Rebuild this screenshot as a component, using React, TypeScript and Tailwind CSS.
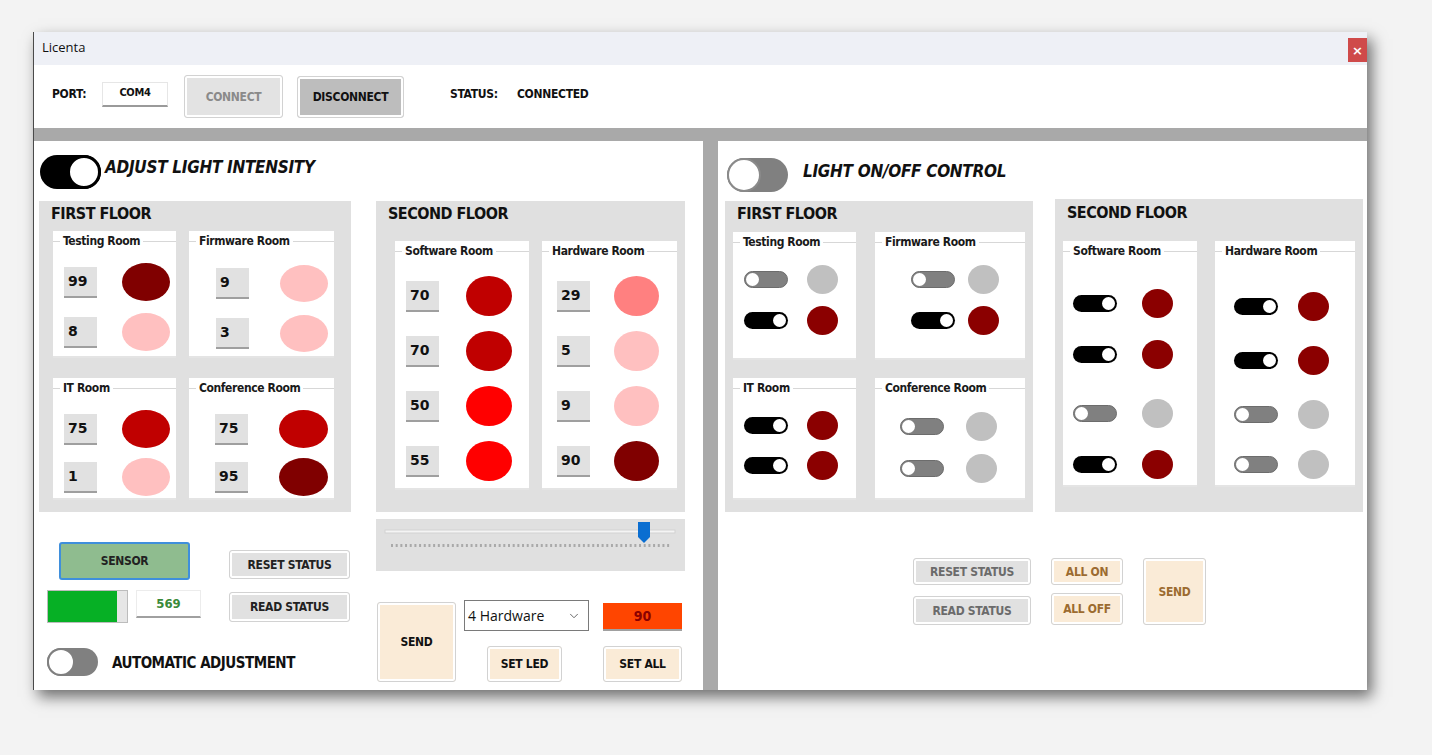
import React from "react";
import { ChevronDown } from "lucide-react";

const NARROW =
  "font-['Liberation_Sans_Narrow','DejaVu_Sans_Condensed',Roboto,sans-serif]";
const NUMF = "font-['DejaVu_Sans',sans-serif]";

function GroupBox({
  title,
  className,
  children,
}: {
  title: string;
  className: string;
  children?: React.ReactNode;
}) {
  return (
    <div className={"bg-white border-b-2 border-[#e4e4e4] flex flex-col " + className}>
      <div className="flex items-center h-[20px] shrink-0">
        <div className="w-[7px] h-px bg-[#d7d7d7]" />
        <span className="px-[3px] text-[12px] tracking-[-0.4px] font-bold text-[#1a1a1a] leading-none whitespace-nowrap">
          {title}
        </span>
        <div className="flex-1 h-px bg-[#d7d7d7]" />
      </div>
      {children}
    </div>
  );
}

function IntRow({ v, circle, gap }: { v: string; circle: string; gap: string }) {
  return (
    <div className="flex items-center">
      <div
        className={
          "w-[33px] h-[31px] bg-[#e1e1e1] border-b-2 border-[#9f9f9f] flex items-center pl-[4px] font-bold text-[14px] text-[#111] " +
          NUMF
        }
      >
        {v}
      </div>
      <div className={"rounded-[50%] " + gap + " " + circle} />
    </div>
  );
}

function SmallToggle({ on }: { on: boolean }) {
  return on ? (
    <div className="w-[44px] h-[17px] rounded-full bg-black flex items-center justify-end pr-[2px]">
      <div className="w-[13px] h-[13px] rounded-full bg-white" />
    </div>
  ) : (
    <div className="w-[44px] h-[17px] rounded-full bg-[#808080] border border-[#6c6c6c] flex items-center pl-[1px]">
      <div className="w-[13px] h-[13px] rounded-full bg-white" />
    </div>
  );
}

function SwRow({ on, gap, mt }: { on: boolean; gap: string; mt: string }) {
  return (
    <div className={"flex items-center h-[30px] " + mt}>
      <SmallToggle on={on} />
      <div
        className={
          "w-[31px] h-[29px] rounded-[50%] " +
          gap +
          " " +
          (on ? "bg-[#8b0000]" : "bg-[#c0c0c0]")
        }
      />
    </div>
  );
}

function Btn({ className, children }: { className: string; children: React.ReactNode }) {
  return (
    <div
      className={
        "flex items-center justify-center border border-[#d2d2d2] rounded-[3px] shadow-[inset_0_0_0_2px_#ffffff] font-bold text-[12px] tracking-[-0.3px] leading-none whitespace-nowrap " +
        className
      }
    >
      {children}
    </div>
  );
}

function Slider() {
  const ticks = Array.from({ length: 60 }, (_, i) => i);
  return (
    <svg width="309" height="52" className="block">
      <rect x="9" y="11" width="290" height="3" fill="#f4f4f4" stroke="#d2d2d2" strokeWidth="1" />
      {ticks.map((i) => (
        <rect key={i} x={15 + i * 4.68} y="25" width="2" height="3" fill="#a9a9a9" />
      ))}
      <path d="M262 3 H274 V18 L268 24 L262 18 Z" fill="#0a6ed1" />
    </svg>
  );
}

const FLOOR_T = "leading-[20px] text-[16px] tracking-[-0.5px] font-bold text-[#111]";

function LeftPanel() {
  return (
    <div className="w-[669px] flex flex-col shrink-0">
      <div className="flex items-start ml-[6px] mt-[14px] h-[34px]">
        <div className="w-[61px] h-[34px] rounded-full bg-black flex items-center justify-end">
          <div className="w-[34px] h-[34px] rounded-full bg-white border-[3px] border-black" />
        </div>
        <span className="ml-[4px] mt-[1px] leading-[22px] italic font-bold text-[17px] tracking-[-0.3px] text-[#111] whitespace-nowrap">
          ADJUST LIGHT INTENSITY
        </span>
      </div>
      <div className="flex ml-[5px] mt-[12px] gap-[25px]">
        {/* Column A */}
        <div className="w-[312px] flex flex-col">
          <div className="w-[312px] h-[311px] bg-[#e0e0e0] flex flex-col">
            <div className={"h-[30px] pl-[12px] pt-[3px] " + FLOOR_T}>FIRST FLOOR</div>
            <div className="flex pl-[14px] gap-[13px]">
              <GroupBox title="Testing Room" className="w-[123px] h-[127px]">
                <div className="pl-[11px] pt-[12px] flex flex-col gap-[12px]">
                  <IntRow v="99" gap="ml-[25px]" circle="w-[48px] h-[38px] bg-[#800000]" />
                  <IntRow v="8" gap="ml-[25px]" circle="w-[48px] h-[38px] bg-[#ffc0c0]" />
                </div>
              </GroupBox>
              <GroupBox title="Firmware Room" className="w-[145px] h-[127px]">
                <div className="pl-[27px] pt-[14px] flex flex-col gap-[13px]">
                  <IntRow v="9" gap="ml-[31px]" circle="w-[48px] h-[37px] bg-[#ffc0c0]" />
                  <IntRow v="3" gap="ml-[31px]" circle="w-[48px] h-[37px] bg-[#ffc0c0]" />
                </div>
              </GroupBox>
            </div>
            <div className="flex pl-[14px] gap-[13px] mt-[20px]">
              <GroupBox title="IT Room" className="w-[123px] h-[122px]">
                <div className="pl-[11px] pt-[12px] flex flex-col gap-[10px]">
                  <IntRow v="75" gap="ml-[25px]" circle="w-[48px] h-[38px] bg-[#c00000]" />
                  <IntRow v="1" gap="ml-[25px]" circle="w-[48px] h-[38px] bg-[#ffc0c0]" />
                </div>
              </GroupBox>
              <GroupBox title="Conference Room" className="w-[145px] h-[122px]">
                <div className="pl-[26px] pt-[12px] flex flex-col gap-[10px]">
                  <IntRow v="75" gap="ml-[31px]" circle="w-[49px] h-[38px] bg-[#c00000]" />
                  <IntRow v="95" gap="ml-[31px]" circle="w-[49px] h-[38px] bg-[#800000]" />
                </div>
              </GroupBox>
            </div>
          </div>
          <div className="flex mt-[30px]">
            <div className="w-[162px] flex flex-col">
              <div className="ml-[20px] w-[131px] h-[38px] bg-[#8fbc8f] border-2 border-[#3f8fdc] rounded-[3px] flex items-center justify-center font-bold text-[12px] tracking-[-0.3px] text-[#222]">
                SENSOR
              </div>
              <div className="flex items-start mt-[10px] ml-[8px]">
                <div className="w-[81px] h-[33px] bg-[#e6e6e6] border border-[#bcbcbc] flex">
                  <div className="w-[69px] h-full bg-[#06b025]" />
                </div>
                <div className="ml-[8px] w-[65px] h-[28px] bg-white border border-[#ececec] border-b-2 border-b-[#a0a0a0] flex items-center justify-center font-bold text-[13px] text-[#3a8a3a]">
                  569
                </div>
              </div>
            </div>
            <div className="ml-[28px] mt-[8px] flex flex-col">
              <Btn className="w-[121px] h-[29px] bg-[#e1e1e1] text-[#222]">RESET STATUS</Btn>
              <Btn className="w-[121px] h-[30px] mt-[13px] bg-[#e1e1e1] text-[#222]">READ STATUS</Btn>
            </div>
          </div>
          <div className="flex items-center ml-[8px] mt-[25px]">
            <div className="w-[51px] h-[28px] rounded-full bg-[#808080] flex items-center">
              <div className="w-[28px] h-[28px] rounded-full bg-white border-2 border-[#808080]" />
            </div>
            <span className="ml-[14px] mt-[3px] font-bold text-[15px] tracking-[-0.5px] text-[#111] whitespace-nowrap">
              AUTOMATIC ADJUSTMENT
            </span>
          </div>
        </div>
        {/* Column B */}
        <div className="w-[309px] flex flex-col">
          <div className="w-[309px] h-[311px] bg-[#e0e0e0] flex flex-col">
            <div className={"h-[40px] pl-[12px] pt-[3px] " + FLOOR_T}>SECOND FLOOR</div>
            <div className="flex pl-[19px] gap-[13px]">
              <GroupBox title="Software Room" className="w-[134px] h-[249px]">
                <div className="pl-[11px] pt-[15px] flex flex-col gap-[15px]">
                  <IntRow v="70" gap="ml-[27px]" circle="w-[46px] h-[40px] bg-[#c00000]" />
                  <IntRow v="70" gap="ml-[27px]" circle="w-[46px] h-[40px] bg-[#c00000]" />
                  <IntRow v="50" gap="ml-[27px]" circle="w-[46px] h-[40px] bg-[#ff0000]" />
                  <IntRow v="55" gap="ml-[27px]" circle="w-[46px] h-[40px] bg-[#ff0000]" />
                </div>
              </GroupBox>
              <GroupBox title="Hardware Room" className="w-[135px] h-[249px]">
                <div className="pl-[15px] pt-[15px] flex flex-col gap-[15px]">
                  <IntRow v="29" gap="ml-[24px]" circle="w-[45px] h-[40px] bg-[#ff8080]" />
                  <IntRow v="5" gap="ml-[24px]" circle="w-[45px] h-[40px] bg-[#ffc0c0]" />
                  <IntRow v="9" gap="ml-[24px]" circle="w-[45px] h-[40px] bg-[#ffc0c0]" />
                  <IntRow v="90" gap="ml-[24px]" circle="w-[45px] h-[40px] bg-[#800000]" />
                </div>
              </GroupBox>
            </div>
          </div>
          <div className="mt-[7px] w-[309px] h-[52px] bg-[#e0e0e0]">
            <Slider />
          </div>
          <div className="flex mt-[29px]">
            <Btn className="ml-[1px] mt-[2px] w-[79px] h-[80px] bg-[#faebd7] text-[#111]">SEND</Btn>
            <div className="ml-[8px] flex flex-col">
              <div className="w-[125px] h-[31px] bg-white border border-[#7a7a7a] flex items-center justify-between pl-[3px] pr-[7px] font-['Open_Sans',sans-serif] text-[14px] text-[#111]">
                <span>4 Hardware</span>
                <ChevronDown size={14} strokeWidth={1.5} color="#555" />
              </div>
              <Btn className="ml-[23px] mt-[15px] w-[75px] h-[36px] bg-[#faebd7] text-[#111]">SET LED</Btn>
            </div>
            <div className="ml-[14px] flex flex-col">
              <div className="mt-[3px] w-[79px] h-[28px] bg-[#ff4500] border-b-2 border-[#a0a0a0] flex items-center justify-center font-bold text-[14px] text-[#8b0000]">
                90
              </div>
              <Btn className="mt-[15px] w-[79px] h-[36px] bg-[#faebd7] text-[#111]">SET ALL</Btn>
            </div>
          </div>
        </div>
      </div>
    </div>
  );
}

function RightPanel() {
  return (
    <div className="w-[649px] flex flex-col shrink-0">
      <div className="flex items-start ml-[9px] mt-[17px]">
        <div className="w-[61px] h-[34px] rounded-full bg-[#808080] flex items-center">
          <div className="w-[34px] h-[34px] rounded-full bg-white border-2 border-[#8a8a8a]" />
        </div>
        <span className="ml-[15px] mt-[2px] leading-[22px] italic font-bold text-[17px] tracking-[-0.3px] text-[#111] whitespace-nowrap">
          LIGHT ON/OFF CONTROL
        </span>
      </div>
      <div className="flex items-start ml-[7px] mt-[7px] gap-[22px]">
        <div className="mt-[2px] w-[308px] h-[311px] bg-[#e0e0e0] flex flex-col">
          <div className={"h-[31px] pl-[12px] pt-[3px] " + FLOOR_T}>FIRST FLOOR</div>
          <div className="flex pl-[8px] gap-[19px]">
            <GroupBox title="Testing Room" className="w-[123px] h-[128px]">
              <div className="pl-[11px] pt-[12px] flex flex-col">
                <SwRow on={false} gap="ml-[19px]" mt="mt-0" />
                <SwRow on={true} gap="ml-[19px]" mt="mt-[11px]" />
              </div>
            </GroupBox>
            <GroupBox title="Firmware Room" className="w-[150px] h-[128px]">
              <div className="pl-[36px] pt-[12px] flex flex-col">
                <SwRow on={false} gap="ml-[13px]" mt="mt-0" />
                <SwRow on={true} gap="ml-[13px]" mt="mt-[11px]" />
              </div>
            </GroupBox>
          </div>
          <div className="flex pl-[8px] gap-[19px] mt-[18px]">
            <GroupBox title="IT Room" className="w-[123px] h-[122px]">
              <div className="pl-[11px] pt-[12px] flex flex-col">
                <SwRow on={true} gap="ml-[19px]" mt="mt-0" />
                <SwRow on={true} gap="ml-[19px]" mt="mt-[10px]" />
              </div>
            </GroupBox>
            <GroupBox title="Conference Room" className="w-[150px] h-[122px]">
              <div className="pl-[25px] pt-[13px] flex flex-col">
                <SwRow on={false} gap="ml-[22px]" mt="mt-0" />
                <SwRow on={false} gap="ml-[22px]" mt="mt-[12px]" />
              </div>
            </GroupBox>
          </div>
        </div>
        <div className="w-[308px] h-[313px] bg-[#e0e0e0] flex flex-col">
          <div className={"h-[42px] pl-[12px] pt-[4px] " + FLOOR_T}>SECOND FLOOR</div>
          <div className="flex pl-[8px] gap-[18px]">
            <GroupBox title="Software Room" className="w-[134px] h-[246px]">
              <div className="pl-[10px] pt-[27px] flex flex-col">
                <SwRow on={true} gap="ml-[25px]" mt="mt-0" />
                <SwRow on={true} gap="ml-[25px]" mt="mt-[21px]" />
                <SwRow on={false} gap="ml-[25px]" mt="mt-[29px]" />
                <SwRow on={true} gap="ml-[25px]" mt="mt-[21px]" />
              </div>
            </GroupBox>
            <GroupBox title="Hardware Room" className="w-[140px] h-[246px]">
              <div className="pl-[19px] pt-[30px] flex flex-col">
                <SwRow on={true} gap="ml-[20px]" mt="mt-0" />
                <SwRow on={true} gap="ml-[20px]" mt="mt-[24px]" />
                <SwRow on={false} gap="ml-[20px]" mt="mt-[24px]" />
                <SwRow on={false} gap="ml-[20px]" mt="mt-[20px]" />
              </div>
            </GroupBox>
          </div>
        </div>
      </div>
      <div className="flex ml-[195px] mt-[46px]">
        <div className="flex flex-col">
          <Btn className="w-[118px] h-[27px] bg-[#e1e1e1] text-[#6b6b6b]">RESET STATUS</Btn>
          <Btn className="w-[118px] h-[29px] mt-[11px] bg-[#e1e1e1] text-[#6b6b6b]">READ STATUS</Btn>
        </div>
        <div className="ml-[20px] flex flex-col">
          <Btn className="w-[72px] h-[27px] bg-[#faebd7] text-[#9c6b30]">ALL ON</Btn>
          <Btn className="w-[72px] h-[32px] mt-[8px] bg-[#faebd7] text-[#9c6b30]">ALL OFF</Btn>
        </div>
        <Btn className="ml-[20px] w-[63px] h-[67px] bg-[#faebd7] text-[#9c6b30]">SEND</Btn>
      </div>
    </div>
  );
}

export default function App() {
  return (
    <div className={"w-[1432px] h-[755px] bg-[#f3f3f3] pl-[33px] pt-[32px] overflow-hidden " + NARROW}>
      <div className="w-[1334px] h-[658px] bg-white border-l border-[#4a4a4a] flex flex-col shadow-[5px_7px_14px_rgba(0,0,0,0.55)]">
        <div className="h-[33px] bg-[#eef0f6] flex items-start justify-between shrink-0">
          <span className="ml-[8px] mt-[6px] text-[13px] font-['Open_Sans',sans-serif] text-[#111]">Licenta</span>
          <div className="w-[19px] h-[24px] mt-[6px] bg-[#cf4a4a] text-white flex items-center justify-center text-[13px] font-bold font-['DejaVu_Sans',sans-serif] leading-none">
            ×
          </div>
        </div>
        <div className="h-[63px] flex items-center shrink-0 text-[12px] tracking-[-0.3px] font-bold text-[#111]">
          <span className="ml-[18px] w-[50px] mb-[5px]">PORT:</span>
          <div className="w-[66px] h-[25px] mb-[5px] bg-white border border-[#e6e6e6] border-b-2 border-b-[#9a9a9a] flex items-center justify-center text-[11px]">
            COM4
          </div>
          <Btn className="ml-[16px] w-[99px] h-[43px] bg-[#e3e3e3] text-[#8a8a8a]">CONNECT</Btn>
          <Btn className="ml-[14px] w-[107px] h-[42px] mt-[1px] bg-[#bdbdbd] text-[#111]">DISCONNECT</Btn>
          <span className="ml-[46px] w-[67px] mb-[5px]">STATUS:</span>
          <span className="mb-[5px]">CONNECTED</span>
        </div>
        <div className="h-[13px] bg-[#a9a9a9] shrink-0" />
        <div className="flex flex-1">
          <LeftPanel />
          <div className="w-[15px] bg-[#a9a9a9] shrink-0" />
          <RightPanel />
        </div>
      </div>
    </div>
  );
}
